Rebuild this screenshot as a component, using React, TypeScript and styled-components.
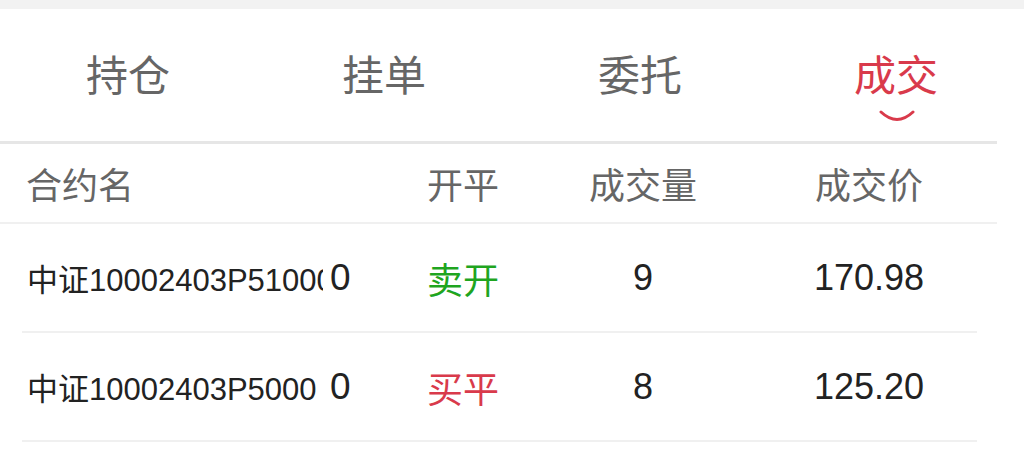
import styled, { createGlobalStyle } from 'styled-components';

const GlobalStyle = createGlobalStyle`
	body {
		margin: 0;
		background: #ffffff;
		font-family: 'Noto Sans CJK SC', 'Liberation Sans', sans-serif;
	}
`;

const tabs = ['持仓', '挂单', '委托', '成交'];
const activeTab = 3;

const trades = [
	{ name: '中证10002403P51000', tail: '0', side: '卖开', kind: 'sell', qty: '9', price: '170.98' },
	{ name: '中证10002403P5000', tail: '0', side: '买平', kind: 'buy', qty: '8', price: '125.20' },
];

export default function App() {
	return (
		<>
			<GlobalStyle />
			<StyledPage>
				<TopStrip />
				<TabBar>
					{tabs.map((t, i) => (
						<Tab key={t} $active={i === activeTab}>
							<span>{t}</span>
							{i === activeTab && (
								<svg width='36' height='14' viewBox='0 0 36 14'>
									<path
										d='M2 3 Q18 18 34 3'
										fill='none'
										stroke='#d93a4b'
										strokeWidth='3'
										strokeLinecap='round'
									/>
								</svg>
							)}
						</Tab>
					))}
				</TabBar>
				<Divider />
				<HeaderRow>
					<HeadCell $left>合约名</HeadCell>
					<HeadCell>开平</HeadCell>
					<HeadCell>成交量</HeadCell>
					<HeadCell>成交价</HeadCell>
				</HeaderRow>
				{trades.map(r => (
					<TradeRow key={r.name}>
						<NameCell>
							<Name>{r.name}</Name>
							<Tail>{r.tail}</Tail>
						</NameCell>
						<SideCell $kind={r.kind}>{r.side}</SideCell>
						<NumCell>{r.qty}</NumCell>
						<NumCell>{r.price}</NumCell>
					</TradeRow>
				))}
			</StyledPage>
		</>
	);
}

const StyledPage = styled.div`
	width: 1024px;
	height: 461px;
	overflow: hidden;
	background: #ffffff;
`;

const TopStrip = styled.div`
	height: 9px;
	background: #f2f2f2;
`;

const TabBar = styled.div`
	display: grid;
	grid-template-columns: repeat(4, 1fr);
	height: 132px;
`;

const Tab = styled.div<{ $active?: boolean }>`
	display: flex;
	flex-direction: column;
	align-items: center;
	padding-top: 39px;
	font-size: 42px;
	line-height: 50px;
	color: ${p => (p.$active ? '#d93a4b' : '#666666')};
	svg {
		margin-top: 11px;
		margin-left: 2px;
	}
`;

const Divider = styled.div`
	width: 997px;
	height: 3px;
	background: #e6e6e6;
`;

const HeaderRow = styled.div`
	display: grid;
	grid-template-columns: 403px 120px 240px 212px;
	align-items: center;
	width: 997px;
	height: 78px;
	border-bottom: 2px solid #f0f0f0;
`;

const HeadCell = styled.div<{ $left?: boolean }>`
	font-size: 36px;
	color: #666666;
	text-align: ${p => (p.$left ? 'left' : 'center')};
	padding-left: ${p => (p.$left ? '26px' : '0')};
	white-space: nowrap;
`;

const TradeRow = styled.div`
	display: grid;
	grid-template-columns: 381px 120px 240px 212px;
	align-items: center;
	margin-left: 22px;
	width: 955px;
	height: 107px;
	border-bottom: 2px solid #f0f0f0;
`;

const NameCell = styled.div`
	display: flex;
	align-items: center;
	padding-left: 5px;
	color: #222222;
`;

const Name = styled.span`
	width: 296px;
	overflow: hidden;
	white-space: nowrap;
	font-size: 31px;
	font-family: 'Liberation Sans', 'Noto Sans CJK SC', sans-serif;
`;

const Tail = styled.span`
	margin-left: 7px;
	font-size: 37px;
	font-family: 'Liberation Sans', sans-serif;
`;

const SideCell = styled.div<{ $kind: string }>`
	text-align: center;
	font-size: 36px;
	color: ${p => (p.$kind === 'sell' ? '#1fa51f' : '#d93a4b')};
`;

const NumCell = styled.div`
	text-align: center;
	font-size: 36px;
	font-family: 'Liberation Sans', sans-serif;
	color: #222222;
`;
